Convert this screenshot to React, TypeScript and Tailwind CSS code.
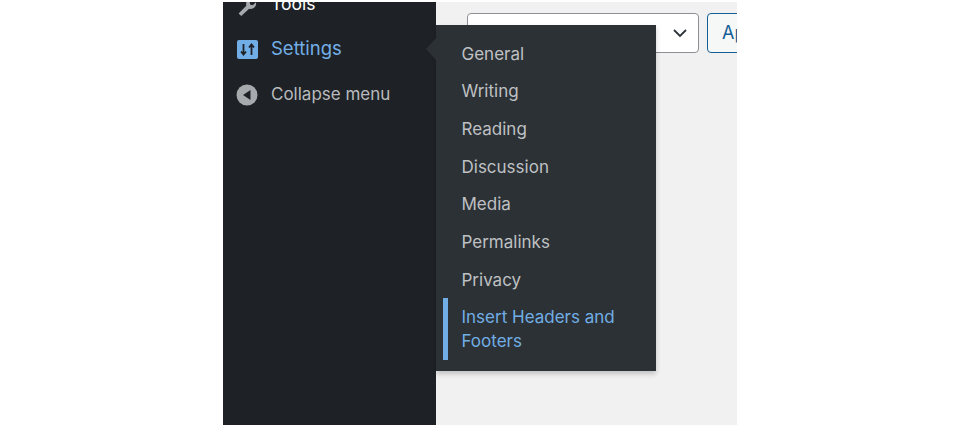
import React from "react";

const items = ["General", "Writing", "Reading", "Discussion", "Media", "Permalinks", "Privacy"];

export default function App() {
  return (
    <div className="w-[959px] h-[425px] bg-white pl-[223px] pt-[2px] overflow-hidden font-['Inter','Liberation_Sans',sans-serif]">
      <div className="relative flex w-[514px] h-[423px] bg-[#f1f1f1] overflow-hidden">
        <aside className="w-[213px] h-full bg-[#1e2226] overflow-hidden shrink-0">
          <div className="flex items-center h-[24px] -mt-[10px] pl-[13px] gap-[14px] text-white text-[17.5px]">
            <svg width="21" height="21" viewBox="0 0 20 20" className="text-[#a7aaad] shrink-0 mt-[2px]">
              <path fill="currentColor" d="M2.5 17.5 9.8 10.2c-.5-1.8 0-3.8 1.4-5.1 1.3-1.3 3.1-1.8 4.8-1.3l-3 3 .6 2.4 2.4.6 3-3c.5 1.7 0 3.6-1.3 4.9-1.4 1.4-3.4 1.9-5.2 1.3L5 20 2.5 17.5z" />
            </svg>
            <span>Tools</span>
          </div>
          <div className="flex items-center h-[24px] mt-[21px] pl-[14px] gap-[13px] text-[#72aee6] text-[18.5px]">
            <svg width="21" height="19" viewBox="0 0 21 19" className="shrink-0">
              <rect width="21" height="19" rx="2" fill="#72aee6" />
              <path d="M6.5 4v10M4 11.5 6.5 14.5 9 11.5M14.5 15V5M12 7.5 14.5 4.5 17 7.5" stroke="#1e2226" strokeWidth="1.8" fill="none" />
            </svg>
            <span>Settings</span>
          </div>
          <div className="flex items-center h-[24px] mt-[22px] pl-[13px] gap-[13px] text-[#b9babd] text-[17px]">
            <svg width="22" height="22" viewBox="0 0 22 22" className="shrink-0">
              <circle cx="11" cy="11" r="10.5" fill="#a7aaad" />
              <path d="M14.5 6v10L7 11z" fill="#1e2226" />
            </svg>
            <span>Collapse menu</span>
          </div>
        </aside>
        <main className="flex-1 pl-[31px] pt-[11px] flex gap-[8px] items-start">
          <div className="w-[232px] h-[40px] shrink-0 bg-white border border-[#8c8f94] rounded-[4px] flex items-center justify-end pr-[10px]">
            <svg width="16" height="16" viewBox="0 0 16 16">
              <path d="M2 5l6 6 6-6" stroke="#2c3338" strokeWidth="1.8" fill="none" />
            </svg>
          </div>
          <div className="w-[60px] h-[40px] shrink-0 bg-[#f6f7f7] border border-[#135e96] rounded-[4px] pl-[14px] text-[#135e96] text-[18px] leading-[38px]">Apply</div>
        </main>
        <div className="absolute left-[213px] top-[23px] w-[220px] h-[346px] bg-[#2c3135] shadow-[0_3px_5px_rgba(0,0,0,0.2)] pt-[10.5px]">
          <div className="absolute -left-[10px] top-[13px] w-0 h-0 border-y-[11px] border-y-transparent border-r-[10px] border-r-[#2c3135]" />
          {items.map((t) => (
            <div key={t} className="h-[37.7px] pl-[25.5px] text-[#bfc0c3] text-[17px] leading-[37.7px]">{t}</div>
          ))}
          <div className="relative pl-[25.5px] pt-[6px] text-[#72aee6] text-[17px] leading-[24px]">
            <div className="absolute left-[7px] -top-[1px] w-[5px] h-[62px] bg-[#72aee6]" />
            Insert Headers and<br />Footers
          </div>
        </div>
      </div>
    </div>
  );
}
